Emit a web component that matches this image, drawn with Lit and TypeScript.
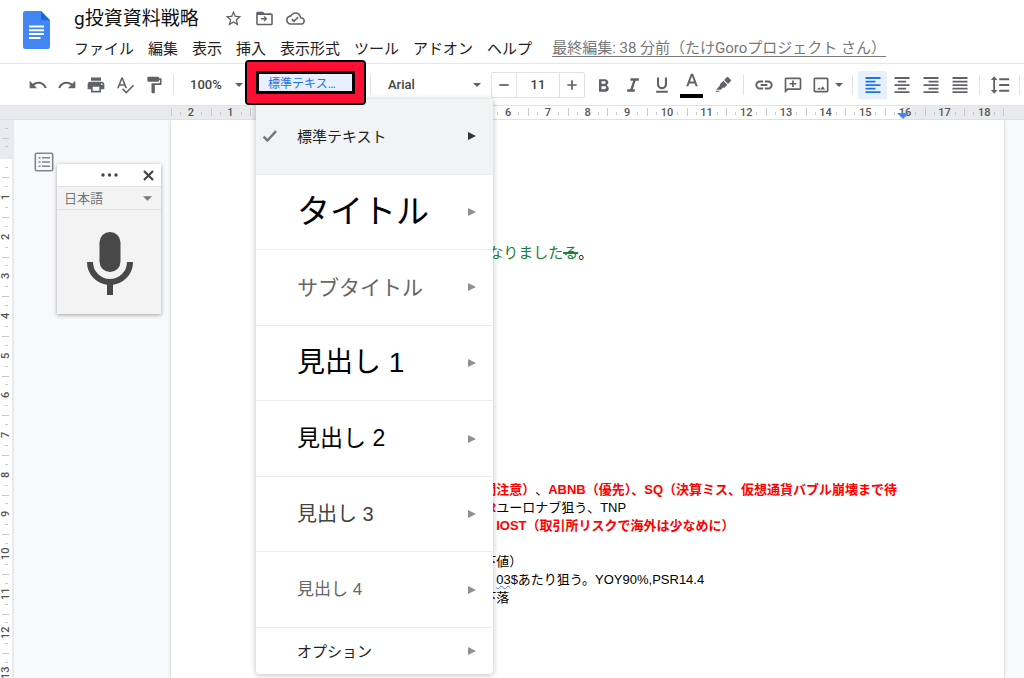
import { LitElement, html, css, svg, nothing } from "lit";
import { customElement, property, state } from "lit/decorators.js";
import { classMap } from "lit/directives/class-map.js";

const ICONS: Record<string, unknown> = {
  undo: svg`<path d="M12.5 8c-2.65 0-5.05.99-6.9 2.6L2 7v9h9l-3.62-3.62c1.39-1.16 3.16-1.88 5.12-1.88 3.54 0 6.55 2.31 7.6 5.5l2.37-.78C21.08 11.03 17.15 8 12.5 8z"/>`,
  redo: svg`<path d="M18.4 10.6C16.55 8.99 14.15 8 11.5 8c-4.65 0-8.58 3.03-9.96 7.22L3.9 16c1.05-3.19 4.05-5.5 7.6-5.5 1.95 0 3.73.72 5.12 1.88L13 16h9V7l-3.6 3.6z"/>`,
  print: svg`<path d="M19 8H5c-1.66 0-3 1.34-3 3v6h4v4h12v-4h4v-6c0-1.66-1.34-3-3-3zm-3 11H8v-5h8v5zm3-7c-.55 0-1-.45-1-1s.45-1 1-1 1 .45 1 1-.45 1-1 1zm-1-9H6v4h12V3z"/>`,
  spell: svg`<path d="M12.45 16h2.09L9.43 3H7.57L2.46 16h2.09l1.12-3h5.64l1.14 3zm-6.02-5L8.5 5.48 10.57 11H6.43zm15.16.59l-8.09 8.09L9.83 16l-1.41 1.41 5.09 5.09L23 13l-1.41-1.41z"/>`,
  paint: svg`<path d="M18 4V3c0-.55-.45-1-1-1H5c-.55 0-1 .45-1 1v4c0 .55.45 1 1 1h12c.55 0 1-.45 1-1V6h1v4H9v11c0 .55.45 1 1 1h2c.55 0 1-.45 1-1v-9h8V4h-3z"/>`,
  minus: svg`<path d="M5 10.7h14v2.6H5z"/>`,
  plus: svg`<path d="M19 13.3h-5.7V19h-2.6v-5.700H5v-2.6h5.700V5h2.600v5.700H19z"/>`,
  bold: svg`<path d="M15.600 11.790c.97-.67 1.650-1.770 1.650-2.790 0-2.260-1.750-4-4-4H6v15h8.040c2.090 0 3.710-1.700 3.710-3.790 0-1.520-.86-2.820-2.150-3.420zM9 7.500h3.500c.83 0 1.500.67 1.500 1.500s-.67 1.500-1.500 1.500H9v-3zm4 9.500H9v-3.500h4c.83 0 1.500.67 1.500 1.500s-.67 2-1.500 2z"/>`,
  italic: svg`<path d="M9 4v3h3.210l-3.420 10H5v3h9v-3h-2.210l3.420-10H19V4z"/>`,
  underline: svg`<path d="M12 17c3.310 0 6-2.690 6-6V3h-2.500v8c0 1.930-1.570 3.500-3.500 3.500S8.500 12.930 8.500 11V3H6v8c0 3.310 2.690 6 6 6zm-7 2v2.300h14V19H5z"/>`,
  textColor: svg`<path d="M10.700 2L5 17h2.700l1.200-3.200h6.200l1.200 3.200H19L13.300 2h-2.600zM9.700 11.500L12 5.200l2.300 6.300h-4.600z"/>`,
  marker: svg`<path d="M13.400 5.400L17 1.800c.6-.6 1.500-.6 2.100 0l3.200 3.200c.6.6.6 1.500 0 2.100l-3.600 3.600zM12.400 6.400l5.300 5.300-3.200 3.200c-.7.7-1.700.8-2.500.5L9.200 18.200H2.600l5.100-5.100c-.4-.8-.2-1.800.5-2.500zM3 19.500h5l-1.500 1.500H2z"/>`,
  link: svg`<path d="M3.900 12c0-1.710 1.390-3.100 3.100-3.100h4V6.600H7c-3 0-5.400 2.400-5.400 5.400s2.400 5.400 5.400 5.400h4v-2.300H7c-1.710 0-3.100-1.390-3.100-3.100zM8 13.100h8v-2.200H8v2.200zm9-6.500h-4v2.300h4c1.710 0 3.100 1.390 3.100 3.100s-1.390 3.100-3.100 3.100h-4v2.300h4c3 0 5.400-2.400 5.400-5.400s-2.400-5.400-5.400-5.400z"/>`,
  comment: svg`<path d="M20 3H4c-1.100 0-2 .9-2 2v17l4-4h14c1.100 0 2-.9 2-2V5c0-1.100-.9-2-2-2zm0 13H5.200L4 17.200V5h16v11zM11 14.500h2v-3h3v-2h-3v-3h-2v3H8v2h3z"/>`,
  image: svg`<path d="M19 5v14H5V5h14m0-2H5c-1.100 0-2 .9-2 2v14c0 1.100.9 2 2 2h14c1.100 0 2-.9 2-2V5c0-1.100-.9-2-2-2zm-4.900 10.500l-2.700 3.200-1.700-2L7.200 17.500h9.800z"/>`,
  alignLeft: svg`<path d="M3 2.500h18v2.300H3zM3 6.800h12v2.300H3zM3 11h18v2.300H3zM3 15.200h12v2.300H3zM3 19.400h18v2.300H3z"/>`,
  alignCenter: svg`<path d="M3 2.500h18v2.300H3zM7 6.800h10v2.300H7zM3 11h18v2.300H3zM7 15.200h10v2.300H7zM3 19.400h18v2.300H3z"/>`,
  alignRight: svg`<path d="M3 2.500h18v2.300H3zM9 6.800h12v2.300H9zM3 11h18v2.300H3zM9 15.200h12v2.300H9zM3 19.400h18v2.300H3z"/>`,
  justify: svg`<path d="M3 2.500h18v2.300H3zM3 6.800h18v2.300H3zM3 11h18v2.300H3zM3 15.200h18v2.300H3zM3 19.400h18v2.300H3z"/>`,
  spacing: svg`<path d="M5 1.500L1 6h2.900v12H1l4 4.500L9 18H6.100V6H9zM11 4h12v2.300H11zM11 10.900h12v2.200H11zM11 17.700h12V20H11z"/>`,
  star: svg`<path d="M22 9.240l-7.190-.62L12 2 9.190 8.630 2 9.240l5.460 4.730L5.820 21 12 17.270 18.180 21l-1.630-7.030L22 9.240zM12 15.400l-3.760 2.270 1-4.280-3.320-2.880 4.380-.38L12 6.100l1.710 4.040 4.380.38-3.320 2.880 1 4.280L12 15.400z"/>`,
  move: svg`<path d="M20.500 5.500H12l-2-2H3.500c-1.100 0-2 .9-2 2v13c0 1.100.9 2 2 2h17c1.100 0 2-.9 2-2v-11c0-1.100-.9-2-2-2zm0 13h-17v-11h17v11zM12 8.700l-1.200 1.200 1.500 1.500H7.500v1.800h4.800l-1.500 1.500L12 15.900l3.600-3.600z"/>`,
  cloud: svg`<path d="M19.350 10.040C18.670 6.590 15.640 4 12 4 9.110 4 6.610 5.640 5.360 8.040 2.350 8.360 0 10.900 0 14c0 3.310 2.690 6 6 6h13c2.760 0 5-2.240 5-5 0-2.640-2.050-4.780-4.650-4.960zM19 18H6c-2.210 0-4-1.790-4-4 0-2.050 1.530-3.760 3.560-3.970l1.070-.11.5-.95C8.080 7.140 9.940 6 12 6c2.620 0 4.880 1.860 5.390 4.430l.3 1.500 1.530.11c1.560.1 2.780 1.410 2.780 2.960 0 1.650-1.350 3-3 3zm-9-3.800l-2.100-2.100-1.400 1.400L10 17l6-6-1.400-1.400z"/>`,
  check: svg`<path d="M9 15.200L4.800 11 2.500 13.300 9 20 22.500 5.500 20 3.200z"/>`,
};

const icon = (name: string, size = 20) => html`
  <svg viewBox="0 0 24 24" width=${size} height=${size} fill="currentColor" aria-hidden="true">${ICONS[name]}</svg>
`;

const caret = html`<svg class="caret" viewBox="0 0 8 4" width="8" height="4" aria-hidden="true"><path d="M0 0h8L4 4z" fill="currentColor"/></svg>`;

const MENUS = ["ファイル", "編集", "表示", "挿入", "表示形式", "ツール", "アドオン", "ヘルプ"];

const STYLES = [
  { label: "標準テキスト", kind: "normal" },
  { label: "タイトル", kind: "title" },
  { label: "サブタイトル", kind: "subtitle" },
  { label: "見出し 1", kind: "h1" },
  { label: "見出し 2", kind: "h2" },
  { label: "見出し 3", kind: "h3" },
  { label: "見出し 4", kind: "h4" },
];

@customElement("docs-style-menu")
class DocsStyleMenu extends LitElement {
  @property() selected = "normal";

  static styles = css`
    :host { display: block; background: #fff; border-radius: 0 0 4px 4px; box-shadow: 0 1px 5px 1px rgba(60, 64, 67, 0.25); }
    .styles { display: grid; grid-auto-rows: 1fr; height: 529px; }
    .item {
      display: flex; align-items: center; width: 100%; margin: 0; padding: 0 17px 0 5px; box-sizing: border-box;
      border: 0; border-bottom: 1px solid #ececec; background: none; text-align: left; color: #222;
      font: 15px/1 "Liberation Sans", "Noto Sans CJK JP", sans-serif; white-space: nowrap;
    }
    .item.current { background: #f1f3f4; }
    .tick { display: flex; width: 36px; color: #777; }
    .label { flex: 1; }
    .arrow { color: #909090; display: block; }
    .current .arrow { color: #333; }
    .title { font-size: 33px; color: #000; }
    .subtitle { font-size: 21px; color: #666; }
    .h1 { font-size: 28px; color: #000; }
    .h2 { font-size: 23px; color: #000; }
    .h3 { font-size: 20px; color: #434343; }
    .h4 { font-size: 17px; color: #666; }
    .options { height: 46px; border-bottom: 0; }
  `;

  private arrow() {
    return html`<svg class="arrow" viewBox="0 0 8 8" width="8" height="8" aria-hidden="true"><path d="M0 0l8 4-8 4z" fill="currentColor"/></svg>`;
  }

  render() {
    return html`
      <div class="styles" role="menu">
        ${STYLES.map((s) => {
          const current = s.kind === this.selected;
          return html`
            <button class=${classMap({ item: true, current })} role="menuitem">
              <span class="tick">${current ? icon("check", 17) : nothing}</span>
              <span class="label ${s.kind}">${s.label}</span>
              ${this.arrow()}
            </button>`;
        })}
      </div>
      <button class="item options" role="menuitem">
        <span class="tick"></span><span class="label">オプション</span>${this.arrow()}
      </button>
    `;
  }
}

@customElement("docs-header")
class DocsHeader extends LitElement {
  static styles = css`
    :host { display: flex; height: 63px; flex: none; border-bottom: 1px solid #e4e6e9; font-family: Roboto, "Noto Sans CJK JP", sans-serif; }
    .logo { flex: none; width: 27px; height: 38px; margin: 11px 24px 0 23px; }
    .info { display: flex; flex-direction: column; min-width: 0; }
    .top { display: flex; align-items: center; height: 37px; gap: 12px; }
    h1 { margin: 0 13px 0 0; font-size: 19px; font-weight: 400; line-height: 24px; color: #111; }
    .act { display: flex; padding: 0; border: 0; background: none; color: #5f6368; }
    nav { display: flex; align-items: center; height: 24px; gap: 14px; white-space: nowrap; }
    .menu { padding: 0; border: 0; background: none; font: inherit; font-size: 15px; line-height: 24px; color: #222; }
    .edited { margin-left: 6px; padding-bottom: 2px; font-size: 15px; line-height: 20px; color: #777; text-underline-offset: 3px; }
  `;

  render() {
    return html`
      <svg class="logo" viewBox="0 0 27 38" role="img" aria-label="ドキュメント">
        <path d="M2.500 0H18l9 9.300v26.200A2.500 2.500 0 0 1 24.500 38h-22A2.500 2.500 0 0 1 0 35.500v-33A2.500 2.500 0 0 1 2.500 0z" fill="#4285f4"/>
        <path d="M18 0l9 9.300h-9z" fill="#1967d2"/>
        <path d="M6 14.500h15v2H6zM6 18.300h15v2H6zM6 22.100h15v2H6zM6 25.900h11.500v2H6z" fill="#fff"/>
      </svg>
      <div class="info">
        <div class="top">
          <h1>g投資資料戦略</h1>
          <button class="act" aria-label="スター">${icon("star", 19)}</button>
          <button class="act" aria-label="移動">${icon("move", 19)}</button>
          <button class="act" aria-label="保存状況">${icon("cloud", 19)}</button>
        </div>
        <nav>
          ${MENUS.map((m) => html`<button class="menu">${m}</button>`)}
          <a class="edited" href="#history">最終編集: 38 分前（たけGoroプロジェクト さん）</a>
        </nav>
      </div>
    `;
  }
}

@customElement("docs-toolbar")
class DocsToolbar extends LitElement {
  @state() private align = "alignLeft";

  static styles = css`
    :host {
      display: flex; align-items: center; flex: none; height: 41px; padding-left: 23px; color: #5f6368;
      font-family: Roboto, "Noto Sans CJK JP", sans-serif;
    }
    .btn {
      display: flex; align-items: center; justify-content: center; flex: none; width: 29px; height: 28px;
      padding: 0; border: 0; border-radius: 2px; background: none; color: inherit;
    }
    .btn.on { background: #e8f0fe; color: #1a73e8; }
    .wide { width: 31px; }
    .color { flex-direction: column; gap: 2px; }
    .bar { width: 23px; height: 4px; background: #000; }
    .pic { width: 40px; gap: 4px; }
    .sep { flex: none; width: 1px; height: 20px; margin: 0 5px; background: #dfe1e5; }
    .caret { flex: none; display: block; pointer-events: none; }
    .pick { display: flex; align-items: center; flex: none; }
    select {
      appearance: none; flex: 1; min-width: 0; padding: 0; border: 0; background: none; color: #444;
      font: 500 13px/20px Roboto, sans-serif;
    }
    .zoom { width: 53px; padding: 0 8px 0 11px; }
    .font { width: 93px; padding: 0 10px 0 12px; }
    .style { position: relative; flex: none; width: 99px; margin: 0 10px 4px 5px; }
    .style-btn {
      display: block; width: 100%; height: 23px; padding: 3px 12px 0; border: 0; background: #e8f0fe; color: #1a73e8; text-align: left;
      font: 12px/20px Roboto, "Noto Sans CJK JP", sans-serif; white-space: nowrap;
    }
    .menu { position: absolute; z-index: 2; top: 28px; left: 0; width: 237px; }
    .ring {
      position: absolute; z-index: 3; inset: -11px; pointer-events: none;
      border: 2px solid #000; border-radius: 4px; box-shadow: inset 0 0 0 9px #fb1033;
    }
    .ring::after { content: ""; position: absolute; inset: 9px; border: 3px solid #000; }
    .size { display: flex; flex: none; height: 24px; margin-right: 4px; border: 1px solid #dfe1e5; border-radius: 2px; }
    .size .btn { width: 24px; height: 24px; }
    .size input {
      width: 44px; padding: 0; border: solid #dfe1e5; border-width: 0 1px; background: none; text-align: center; box-sizing: border-box;
      color: #444; font: 500 13px/24px Roboto, sans-serif;
    }
  `;

  private tool(name: string, label: string) {
    return html`<button class="btn" aria-label=${label}>${icon(name)}</button>`;
  }

  private alignTool(name: string, label: string) {
    return html`<button class=${classMap({ btn: true, on: this.align === name })} aria-label=${label}
      @click=${() => (this.align = name)}>${icon(name)}</button>`;
  }

  render() {
    const sep = html`<span class="sep"></span>`;
    return html`
      ${this.tool("undo", "元に戻す")}${this.tool("redo", "やり直し")}${this.tool("print", "印刷")}
      ${this.tool("spell", "スペルチェック")}${this.tool("paint", "書式を貼り付け")}
      ${sep}
      <label class="pick zoom"><select aria-label="ズーム"><option>100%</option></select>${caret}</label>
      <div class="style">
        <button class="style-btn" aria-haspopup="menu" aria-expanded="true">標準テキス…</button>
        <docs-style-menu class="menu"></docs-style-menu>
        <span class="ring"></span>
      </div>
      ${sep}
      <label class="pick font"><select aria-label="フォント"><option>Arial</option></select>${caret}</label>
      <div class="size">
        <button class="btn" aria-label="縮小">${icon("minus", 16)}</button>
        <input aria-label="フォントサイズ" .value=${"11"} />
        <button class="btn" aria-label="拡大">${icon("plus", 16)}</button>
      </div>
      ${this.tool("bold", "太字")}${this.tool("italic", "斜体")}${this.tool("underline", "下線")}
      <button class="btn wide color" aria-label="テキストの色">${icon("textColor", 20)}<span class="bar"></span></button>
      <button class="btn wide" aria-label="ハイライト">${icon("marker", 18)}</button>
      ${sep}
      ${this.tool("link", "リンク")}${this.tool("comment", "コメント")}
      <button class="btn pic" aria-label="画像">${icon("image")}${caret}</button>
      ${sep}
      ${this.alignTool("alignLeft", "左揃え")}${this.alignTool("alignCenter", "中央揃え")}
      ${this.alignTool("alignRight", "右揃え")}${this.alignTool("justify", "両端揃え")}
      ${sep}
      ${this.tool("spacing", "行間隔")}
      ${sep}
    `;
  }
}

@customElement("docs-ruler")
class DocsRuler extends LitElement {
  @property({ type: Boolean, reflect: true }) vertical = false;
  @property({ type: Array }) marks: string[] = [];

  static styles = css`
    :host { display: flex; font: 500 11px/14px Roboto, sans-serif; color: #555; --tick: linear-gradient(#c8cacd, #c8cacd); }
    :host([vertical]) { flex-direction: column; line-height: 12px; }
    .cell {
      display: flex; align-items: center; justify-content: center; gap: 3px; flex: 1 0 0; min-width: 0; height: 14px;
      background: var(--tick) 0 2px / 1px 8px no-repeat;
    }
    .cell:last-child { background: var(--tick) 0 2px / 1px 8px no-repeat, var(--tick) 100% 2px / 1px 8px no-repeat; }
    .minor { flex: none; width: 1px; height: 3px; background: #c8cacd; }
    .num { flex: none; width: 14px; text-align: center; }
    :host([vertical]) .cell {
      flex: none; flex-direction: column; width: 12px; height: var(--cm);
      background: var(--tick) 2px 0 / 7px 1px no-repeat;
    }
    :host([vertical]) .minor { width: 3px; height: 1px; }
    :host([vertical]) .num { width: 12px; height: 14px; writing-mode: vertical-rl; transform: rotate(180deg); }
  `;

  render() {
    return this.marks.map((m) => html`
      <div class="cell"><i class="minor"></i><span class="num">${m}</span><i class="minor"></i></div>`);
  }
}

@customElement("voice-panel")
class VoicePanel extends LitElement {
  static styles = css`
    :host { display: block; width: 104px; background: #f3f3f3; box-shadow: 0 1px 4px rgba(0, 0, 0, 0.35); }
    .head { display: flex; align-items: center; justify-content: flex-end; height: 22px; padding-right: 7px; gap: 24px; background: #fff; color: #444; }
    .close { display: flex; padding: 0; border: 0; background: none; color: inherit; }
    .lang { display: flex; align-items: center; height: 22px; padding: 0 9px 0 7px; border: solid #e2e2e2; border-width: 1px 0; color: #777; }
    select { appearance: none; flex: 1; min-width: 0; padding: 0; border: 0; background: none; color: inherit; font: 13px/20px "Noto Sans CJK JP", sans-serif; }
    .mic { display: flex; justify-content: center; width: 100%; height: 104px; padding: 22px 0 0 2px; border: 0; background: none; }
  `;

  render() {
    return html`
      <div class="head">
        <svg viewBox="0 0 18 4" width="18" height="4" fill="currentColor" aria-hidden="true"><circle cx="2" cy="2" r="1.700"/><circle cx="8.500" cy="2" r="1.700"/><circle cx="15" cy="2" r="1.700"/></svg>
        <button class="close" aria-label="閉じる">
          <svg viewBox="0 0 11 11" width="11" height="11" stroke="currentColor" stroke-width="2.200" aria-hidden="true"><path d="M1 1l9 9M10 1l-9 9"/></svg>
        </button>
      </div>
      <label class="lang"><select aria-label="言語"><option>日本語</option></select>
        <svg viewBox="0 0 8 4" width="9" height="5" aria-hidden="true"><path d="M0 0h8L4 4z" fill="currentColor"/></svg></label>
      <button class="mic" aria-label="音声入力">
        <svg viewBox="0 0 46 64" width="46" height="64" aria-hidden="true">
          <rect x="12.500" y="0" width="21" height="40" rx="10.500" fill="#484848"/>
          <path d="M3 30a20 20 0 0 0 40 0M23 50v13" fill="none" stroke="#484848" stroke-width="6"/>
        </svg>
      </button>
    `;
  }
}

@customElement("app-root")
class AppRoot extends LitElement {
  static styles = css`
    :host {
      --cm: calc((100vw - 191px) / 21);
      display: flex; flex-direction: column; height: 100vh; overflow: hidden; background: #fff;
    }
    .top-ruler { position: relative; flex: none; display: flex; height: 15px; padding: 0 20px 0 171px; background: #e8eaed; border: solid #dfe1e5; border-width: 1px 0 1px; box-sizing: border-box; }
    .h-ruler { flex: 1; background: linear-gradient(to right, transparent 11.900%, #fff 11.900% 87.850%, transparent 87.850%); }
    .indent { position: absolute; top: 7px; right: calc(20px + var(--cm) * 2.550 - 6px); }
    .work { flex: 1; display: flex; min-height: 0; background: #f8f9fb; }
    .side-ruler { flex: none; width: 12px; overflow: hidden; border-right: 2px solid #e8eaed; background: linear-gradient(#e8eaed 39px, #fff 39px); }
    .v-ruler { margin-top: -22px; }
    .gutter { position: relative; flex: none; width: 157px; }
    .outline { position: absolute; left: 20px; top: 32px; display: flex; padding: 0; border: 0; background: none; }
    .voice { position: absolute; left: 43px; top: 44px; }
    .page {
      flex: 1; min-width: 0; margin-right: 20px; padding: 121px calc(var(--cm) * 2.500) 0; overflow: hidden; background: #fff;
      box-shadow: 0 0 3px rgba(60, 64, 67, 0.3); color: #000;
      font: 13px/18px "Liberation Sans", "Noto Sans CJK JP", sans-serif; white-space: nowrap;
    }
    p { display: flex; min-height: 18px; margin: 0; }
    .lead { flex: none; width: 226px; text-align: right; }
    .intro { margin-bottom: 216px; padding-left: 218px; font-size: 15px; line-height: 24px; }
    .green { color: #188038; }
    .green s { text-decoration-thickness: 2px; }
    .hot { color: #f00; font-weight: 700; }
    .typo { text-decoration: underline wavy #4285f4 1px; text-underline-offset: 1px; text-decoration-skip-ink: none; }
  `;

  private across = ["2", "1", "", ...Array.from({ length: 18 }, (_, i) => `${i + 1}`)];
  private down = ["", "", ...Array.from({ length: 13 }, (_, i) => `${i + 1}`)];

  render() {
    return html`
      <docs-header></docs-header>
      <docs-toolbar></docs-toolbar>
      <div class="top-ruler">
        <docs-ruler class="h-ruler" .marks=${this.across}></docs-ruler>
        <svg class="indent" viewBox="0 0 12 6" width="12" height="6" aria-hidden="true"><path d="M0 0h12L6 6z" fill="#4285f4"/></svg>
      </div>
      <div class="work">
        <div class="side-ruler"><docs-ruler class="v-ruler" vertical .marks=${this.down}></docs-ruler></div>
        <aside class="gutter">
          <button class="outline" aria-label="概要を表示">
            <svg viewBox="0 0 20 20" width="20" height="20" fill="#80868b" aria-hidden="true">
              <rect x="1.300" y="1.300" width="17.400" height="17.400" rx="1.500" fill="none" stroke="#80868b" stroke-width="1.600"/>
              <path d="M4.500 5h2v1.600h-2zM8 5h8v1.600H8zM4.500 9.200h2v1.600h-2zM8 9.200h8v1.600H8zM4.500 13.400h2V15h-2zM8 13.400h8V15H8z"/>
            </svg>
          </button>
          <voice-panel class="voice"></voice-panel>
        </aside>
        <main class="page">
          <p class="intro"><span class="green">なりました<s>る</s></span>。</p>
          <p><span class="lead hot">間</span><span class="hot">注意）</span>、<span class="hot">ABNB（優先）、SQ（決算ミス、仮想通貨バブル崩壊まで待</span></p>
          <p><span class="lead hot">R</span>ユーロナブ狙う、TNP</p>
          <p><span class="lead hot">、</span><span class="hot">IOST（取引所リスクで海外は少なめに）</span></p>
          <p></p>
          <p><span class="lead">下</span>値）</p>
          <p><span class="lead"></span><span class="typo">03</span>$あたり狙う。YOY90%,PSR14.4</p>
          <p><span class="lead">下</span>落</p>
        </main>
      </div>
    `;
  }
}
